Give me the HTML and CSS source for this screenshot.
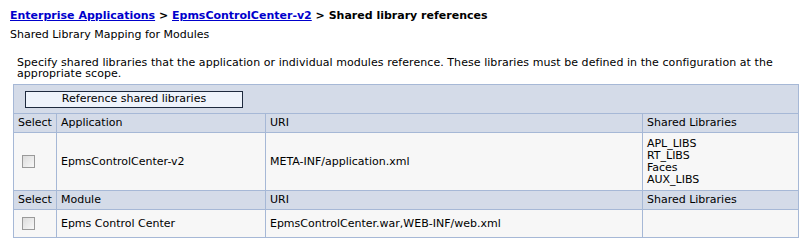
FILE: index.html
```html
<!DOCTYPE html>
<html lang="en">
<head>
    <meta charset="UTF-8">
    <title>Shared library references</title>
    <link rel="stylesheet" href="styles.css">
</head>
<body>
<div class="breadcrumb">
    <a href="#">Enterprise Applications</a> &gt; <a href="#">EpmsControlCenter-v2</a> &gt; Shared library references
</div>
<div class="subtitle">Shared Library Mapping for Modules</div>

<div class="content">
    <p class="desc">Specify shared libraries that the application or individual modules reference. These libraries must be defined in the configuration at the appropriate scope.</p>

    <table class="grid">
        <tr class="toolbar">
            <td colspan="4"><button class="btn">Reference shared libraries</button></td>
        </tr>
        <tr class="head">
            <th class="sel">Select</th>
            <th class="name">Application</th>
            <th class="uri">URI</th>
            <th>Shared Libraries</th>
        </tr>
        <tr class="row tall">
            <td class="sel"><span class="check"></span></td>
            <td>EpmsControlCenter-v2</td>
            <td>META-INF/application.xml</td>
            <td class="libs">APL_LIBS<br>RT_LIBS<br>Faces<br>AUX_LIBS</td>
        </tr>
        <tr class="head">
            <th class="sel">Select</th>
            <th>Module</th>
            <th>URI</th>
            <th>Shared Libraries</th>
        </tr>
        <tr class="row">
            <td class="sel"><span class="check"></span></td>
            <td>Epms Control Center</td>
            <td>EpmsControlCenter.war,WEB-INF/web.xml</td>
            <td></td>
        </tr>
    </table>
</div>
</body>
</html>
```

FILE: styles.css
```css
body {
    margin: 0;
    font-family: "DejaVu Sans", Verdana, sans-serif;
    font-size: 11px;
    color: #000;
    background: #fff;
}

.breadcrumb {
    padding: 9px 0 0 10px;
    font-weight: bold;
    line-height: 14px;
}

.breadcrumb a {
    color: #0000cc;
}

.subtitle {
    padding: 5px 0 0 10px;
    line-height: 14px;
}

.content {
    padding: 0 8px 0 13px;
}

.desc {
    margin: 15px 0 0 4px;
    line-height: 11px;
    letter-spacing: 0.06px;
}

.grid {
    width: 786px;
    margin-top: 5px;
    border-collapse: collapse;
    border: 1px solid #a6b8d6;
    line-height: 12px;
}

.grid td,
.grid th {
    border: 1px solid #a6b8d6;
    text-align: left;
    font-weight: normal;
    padding: 0 4px;
}

.toolbar td {
    background: #d4dbe8;
    height: 28px;
    padding: 0 0 0 11px;
}

.btn {
    font: inherit;
    width: 218px;
    height: 17px;
    padding: 0;
    border: 1px solid #1e2a3e;
    background: #eef3fb;
    color: #000;
    text-align: center;
    display: block;
}

.head th {
    background: #d4dbe8;
    height: 18px;
}

.row td {
    background: #f7f7f7;
    height: 27px;
}

.tall td {
    height: 57px;
}

.sel {
    width: 33px;
}

.name {
    width: 200px;
}

.uri {
    width: 368px;
}

.libs {
    line-height: 12px;
}

.check {
    display: block;
    width: 11px;
    height: 11px;
    margin-left: 4px;
    border: 1px solid #9a9a9a;
    background: linear-gradient(135deg, #dcdcdc, #f8f8f8);
}
```
